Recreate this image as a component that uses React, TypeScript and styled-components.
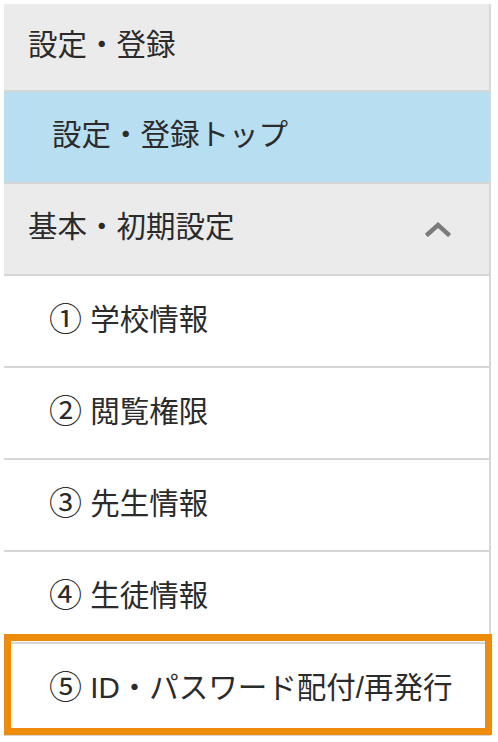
import React from "react";
import styled, { createGlobalStyle } from "styled-components";

const GlobalStyle = createGlobalStyle`
  html, body {
    margin: 0;
    padding: 0;
    background: #ffffff;
  }
  body {
    font-family: "Liberation Sans", "Noto Sans CJK JP", sans-serif;
    color: #2b2b2b;
  }
`;

const Nav = styled.nav`
  margin: 4px 0 0 4px;
  width: 485px;
  border-right: 2px solid #d8d8d8;
  display: flex;
  flex-direction: column;
`;

type Variant = "header" | "active" | "item";

const bg: Record<Variant, string> = {
  header: "#ebebeb",
  active: "#b8def1",
  item: "#ffffff",
};

const Row = styled.div<{ $variant: Variant; $height?: number; $highlight?: boolean }>`
  position: relative;
  display: flex;
  align-items: center;
  justify-content: space-between;
  height: ${(p) => p.$height ?? 90}px;
  padding: 0 38px 0 ${(p) => (p.$variant === "header" ? 24 : p.$variant === "active" ? 48 : 45)}px;
  background: ${(p) => bg[p.$variant]};
  border-bottom: 2px solid #d6d6d6;
  font-size: 29.5px;
  line-height: 1;
  ${(p) =>
    p.$highlight &&
    `
    &::after {
      content: "";
      position: absolute;
      top: -10px;
      left: 0;
      right: -3px;
      bottom: -1px;
      border: 7px solid #ed8b0b;
      pointer-events: none;
    }
  `}
`;

const Label = styled.span`
  white-space: nowrap;
  transform: translateY(-2px);
`;

const Num = styled.span`
  font-size: 33px;
  line-height: 1;
  vertical-align: -1px;
`;

const Chevron = () => (
  <svg width="26" height="16" viewBox="0 0 26 16" aria-hidden="true">
    <polyline
      points="3,13 13,4 23,13"
      fill="none"
      stroke="#7b7b7b"
      strokeWidth="4.5"
      strokeLinecap="square"
      strokeLinejoin="miter"
    />
  </svg>
);

const items = [
  { n: "①", t: "学校情報" },
  { n: "②", t: "閲覧権限" },
  { n: "③", t: "先生情報" },
  { n: "④", t: "生徒情報" },
  { n: "⑤", t: "ID・パスワード配付/再発行", hl: true },
];

export default function App() {
  return (
    <>
      <GlobalStyle />
      <Nav>
        <Row $variant="header" $height={86}>
          <Label>設定・登録</Label>
        </Row>
        <Row $variant="active">
          <Label>設定・登録トップ</Label>
        </Row>
        <Row $variant="header">
          <Label>基本・初期設定</Label>
          <Chevron />
        </Row>
        {items.map((it) => (
          <Row key={it.n} $variant="item" $highlight={it.hl}>
            <Label>
              <Num>{it.n}</Num> {it.t}
            </Label>
          </Row>
        ))}
      </Nav>
    </>
  );
}
